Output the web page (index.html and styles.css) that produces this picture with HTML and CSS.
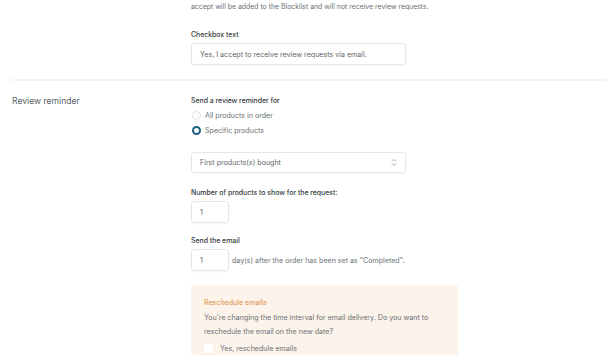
FILE: index.html
```html
<!DOCTYPE html>
<html lang="en">
<head>
    <meta charset="UTF-8">
    <meta name="viewport" content="width=device-width, initial-scale=1.0">
    <title>Review settings</title>
    <link rel="stylesheet" href="styles.css">
</head>
<body>
    <div class="settings">
        <div class="setting-row first">
            <div class="setting-label"></div>
            <div class="setting-fields">
                <p class="help">Customers who don't tick the consent checkbox on the checkout page, or who do not explicitly<br>
                    accept will be added to the Blocklist and will not receive review requests.</p>
                <div class="field">
                    <label class="field-label" for="checkbox-text">Checkbox text</label>
                    <input type="text" id="checkbox-text" class="text-input wide" value="Yes, I accept to receive review requests via email.">
                </div>
            </div>
        </div>

        <div class="setting-row">
            <div class="setting-label">Review reminder</div>
            <div class="setting-fields">
                <div class="field">
                    <span class="field-label">Send a review reminder for</span>
                    <label class="radio"><span class="radio-dot"></span>All products in order</label>
                    <label class="radio"><span class="radio-dot checked"></span>Specific products</label>
                </div>

                <div class="select-box">
                    <span>First products(s) bought</span>
                    <svg width="6" height="9" viewBox="0 0 6 9" fill="none" stroke="#9aa0a6" stroke-width="0.9">
                        <path d="M1 3.5 L3 1.5 L5 3.5"/>
                        <path d="M1 5.5 L3 7.5 L5 5.5"/>
                    </svg>
                </div>

                <div class="field">
                    <label class="field-label" for="num-products">Number of products to show for the request:</label>
                    <input type="text" id="num-products" class="text-input small" value="1">
                </div>

                <div class="field">
                    <label class="field-label" for="send-days">Send the email</label>
                    <div class="inline">
                        <input type="text" id="send-days" class="text-input small" value="1">
                        <span class="inline-text">day(s) after the order has been set as "Completed".</span>
                    </div>
                </div>

                <div class="notice">
                    <div class="notice-title">Reschedule emails</div>
                    <p>You're changing the time interval for email delivery. Do you want to reschedule the email on the new date?</p>
                    <label class="checkbox"><span class="check-box"></span>Yes, reschedule emails</label>
                </div>
            </div>
        </div>
    </div>
</body>
</html>
```

FILE: styles.css
```css
/* Base */
body {
    margin: 0;
    background-color: #fff;
    font-family: Inter, "Noto Sans", sans-serif;
    color: #6b7075;
    overflow: hidden;
}
.settings {
    margin-top: -11px;
    padding-left: 12px;
}
.setting-row {
    display: flex;
    padding: 14px 0 14px;
    border-top: 2px solid #f3f4f5;
}
.setting-row.first {
    border-top: none;
    padding: 0 0 2px;
}
.setting-label {
    width: 179px;
    flex-shrink: 0;
    font-size: 8.6px;
    color: #5a5f64;
    line-height: 12px;
}
.setting-fields {
    flex: 1;
}
.help {
    margin: 0 0 16px;
    font-size: 6.9px;
    line-height: 12px;
    white-space: nowrap;
}
.field {
    margin-bottom: 12px;
}
.field-label {
    display: block;
    font-size: 6.9px;
    font-weight: 500;
    color: #343a40;
    line-height: 11px;
    margin-bottom: 3px;
}
.text-input {
    display: block;
    box-sizing: border-box;
    height: 22px;
    border: 1px solid #e4e6e8;
    border-radius: 3px;
    box-shadow: 0 1px 2px rgba(0, 0, 0, 0.04);
    padding: 0 8px;
    font-family: inherit;
    font-size: 7.1px;
    color: #5f6469;
    background: #fff;
    outline: none;
}
.text-input.wide {
    width: 215px;
}
.text-input.small {
    width: 38px;
}
/* Radios */
.radio,
.checkbox {
    display: flex;
    align-items: center;
    font-size: 7.1px;
    line-height: 15px;
    color: #6b7075;
}
.radio:first-of-type {
    margin-top: -1px;
}
.radio-dot {
    box-sizing: border-box;
    width: 9px;
    height: 9px;
    border-radius: 50%;
    border: 1px solid #dde3ea;
    margin: 0 4px 0 1px;
    background: #fff;
}
.radio-dot.checked {
    border: 2.5px solid #1b5f7c;
    background: #fff;
}
.select-box {
    box-sizing: border-box;
    width: 215px;
    height: 21px;
    margin: 14px 0 14px;
    border: 1px solid #e4e6e8;
    border-radius: 3px;
    box-shadow: 0 1px 2px rgba(0, 0, 0, 0.04);
    display: flex;
    align-items: center;
    justify-content: space-between;
    padding: 0 8px;
    font-size: 7.1px;
    color: #5f6469;
}
.inline {
    display: flex;
    align-items: center;
}
.inline-text {
    margin-left: 3px;
    font-size: 7.1px;
}
/* Reschedule notice */
.notice {
    width: 267px;
    box-sizing: border-box;
    background-color: #fcf3ea;
    border-radius: 3px;
    margin-top: 14px;
    padding: 13px 13px 10px;
}
.notice-title {
    font-size: 7.1px;
    color: #e0893b;
    line-height: 10px;
    margin-bottom: 3px;
}
.notice p {
    margin: 0 0 2px;
    font-size: 7.1px;
    line-height: 14px;
}
.check-box {
    width: 9px;
    height: 9px;
    background: #fff;
    border-radius: 2px;
    margin-right: 7px;
}
```
